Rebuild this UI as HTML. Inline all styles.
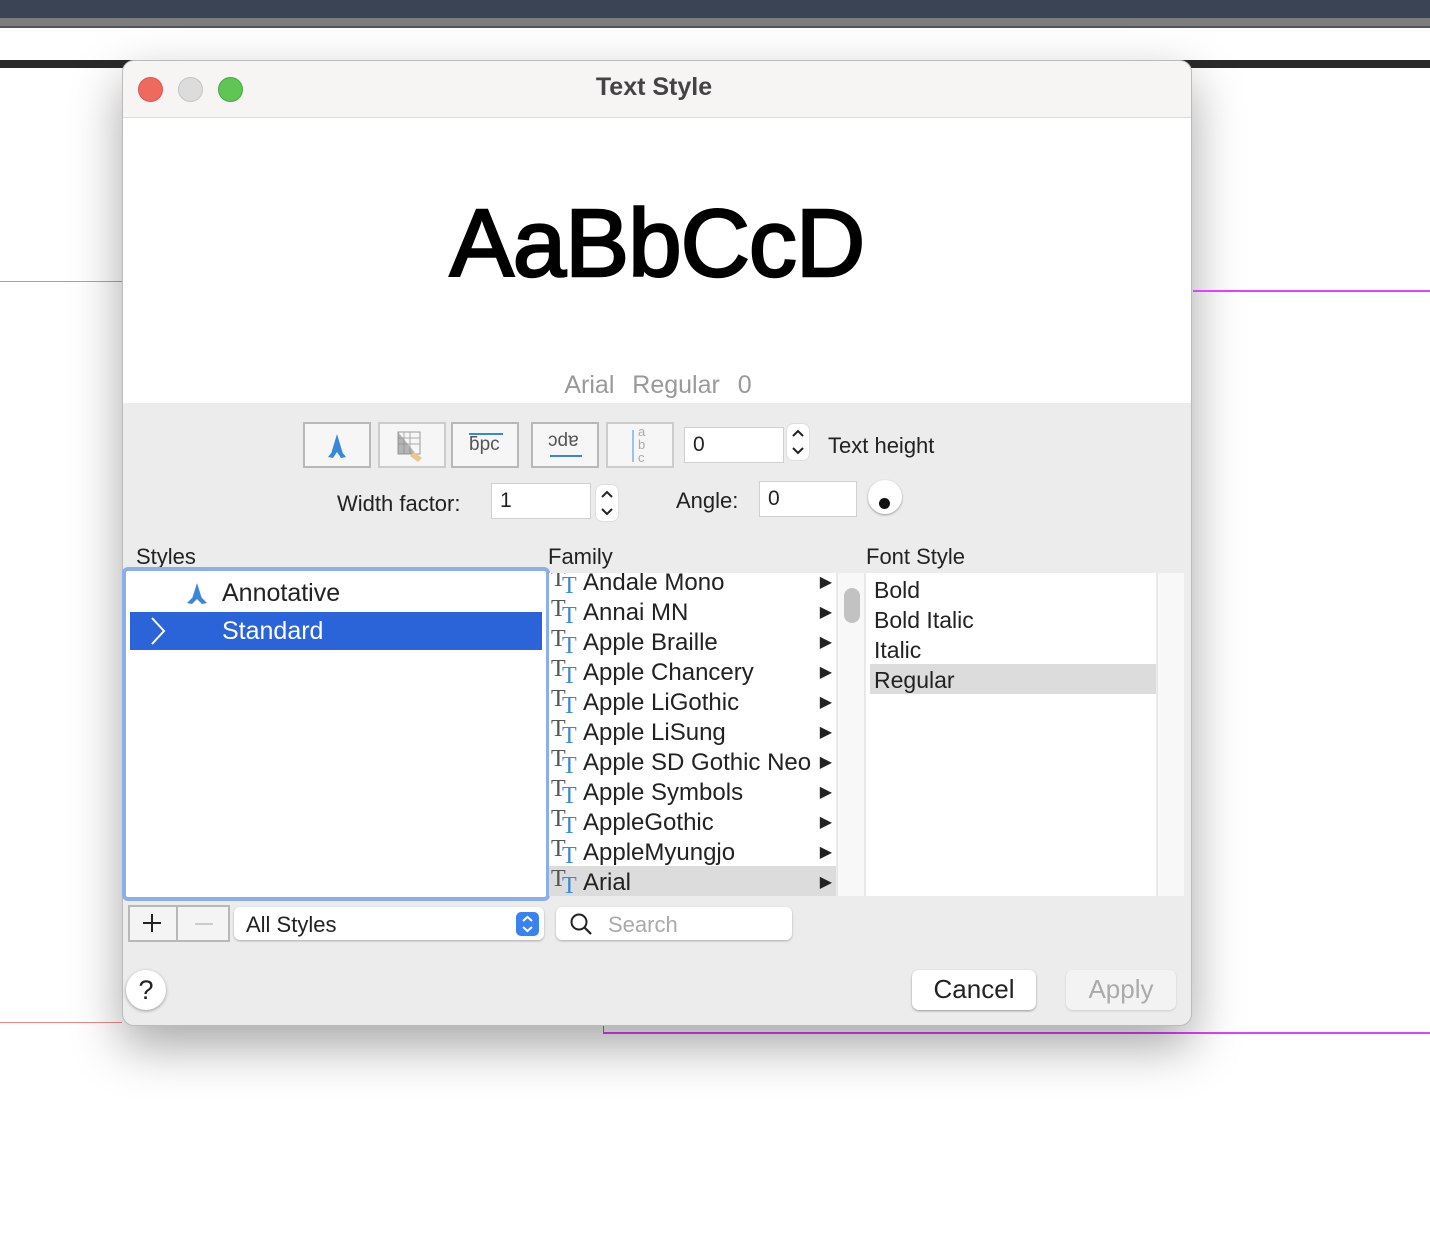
<!DOCTYPE html>
<html><head><meta charset="utf-8"><style>
*{margin:0;padding:0;box-sizing:border-box}
body{width:1430px;height:1234px;background:#fff;position:relative;overflow:hidden;font-family:"Liberation Sans",sans-serif;color:#222}
.a{position:absolute}
.btn{position:absolute;top:422px;width:68px;height:46px;border:2px solid #b8b8b8;background:#f6f6f6}
.inp{position:absolute;background:#fff;border:1px solid #d0d0d0;font-size:21px;padding-left:8px;line-height:34px}
.step{position:absolute;width:22px;height:36px;background:#fff;border-radius:6px;box-shadow:0 0 1px #999}
.fam{position:absolute;left:549px;width:287px;height:30px;font-size:24px;line-height:30px}
.fam .t1{position:absolute;left:2px;top:-4px;font-family:"Liberation Serif",serif;font-size:24px;color:#555}
.fam .t2{position:absolute;left:13px;top:3px;font-family:"Liberation Serif",serif;font-size:24px;color:#3a86d8}
.fam .n{position:absolute;left:34px}
.fam .ar{position:absolute;right:4px;top:0;font-size:16px}
.fs{position:absolute;left:874px;font-size:23px;line-height:30px}
</style></head><body>
<div class="a" style="left:0;top:0;width:1430px;height:18px;background:#3a4454"></div>
<div class="a" style="left:0;top:18px;width:1430px;height:10px;background:#7d7d7d;border-bottom:2px solid #555"></div>
<div class="a" style="left:0;top:60px;width:1430px;height:8px;background:#2a2a2a"></div>
<div class="a" style="left:0;top:281px;width:122px;height:1px;background:#e88"></div>
<div class="a" style="left:0;top:1022px;width:122px;height:1px;background:#e88"></div>
<div class="a" style="left:603px;top:1026px;width:1px;height:7px;background:#d4f"></div>
<div class="a" style="left:603px;top:1032px;width:827px;height:2px;background:#d4f"></div>

<div class="a" style="left:122px;top:60px;width:1070px;height:966px;background:#ececec;border-radius:12px;box-shadow:0 20px 50px rgba(0,0,0,.35);overflow:hidden;border:1px solid #bbb">
 <div class="a" style="left:0;top:0;width:1070px;height:57px;background:#f6f5f4;border-bottom:1px solid #dcdcdc"></div>
 <div class="a" style="left:15px;top:16px;width:25px;height:25px;border-radius:50%;background:#ee6a5e;border:1px solid #d55"></div>
 <div class="a" style="left:55px;top:16px;width:25px;height:25px;border-radius:50%;background:#dcdcdc;border:1px solid #c4c4c4"></div>
 <div class="a" style="left:95px;top:16px;width:25px;height:25px;border-radius:50%;background:#61c554;border:1px solid #4a4"></div>
 <div class="a" style="left:-4px;top:12px;width:1070px;text-align:center;font-size:25px;font-weight:bold;color:#444">Text Style</div>
 <div class="a" style="left:0;top:57px;width:1070px;height:285px;background:#fff"></div>
 <div class="a" style="left:0;top:128px;width:1068px;text-align:center;font-size:96px;color:#000;letter-spacing:-1px;line-height:110px;-webkit-text-stroke:2.5px #000">AaBbCcD</div>
 <div class="a" style="left:0;top:310px;width:1070px;text-align:center;font-size:25px;color:#999;word-spacing:2px">Arial&nbsp; Regular&nbsp; 0</div>
</div>
<div class="a" style="left:1193px;top:290px;width:237px;height:2px;background:#d4f"></div>

<div class="btn" style="left:303px"><svg width="64" height="42"><path d="M32 10 L38 30 L32 26 L26 30 Z M23 33 L32 22 L41 33 L36 34 L32 28 L28 34 Z" fill="#3a86d8"/></svg></div>
<div class="btn" style="left:378px;border-color:#ccc"><svg width="64" height="42"><rect x="18" y="8" width="22" height="22" fill="none" stroke="#999"/><path d="M24 8 v22 M30 8 v22 M18 14 h22 M18 20 h22" stroke="#aaa"/><path d="M18 8 L18 30 L36 30 Z" fill="#888" opacity=".6"/><path d="M34 28 l8 6 -4 4 -8-6z" fill="#e8c890"/></svg></div>
<div class="btn" style="left:451px"><div class="a" style="left:16px;top:9px;width:34px;height:2px;background:#3a86d8"></div><div class="a" style="left:16px;top:10px;font-size:19px;color:#555">ƃpc</div></div>
<div class="btn" style="left:531px"><div class="a" style="left:15px;top:6px;font-size:19px;color:#555">ɔdɐ</div><div class="a" style="left:17px;top:31px;width:32px;height:2px;background:#3a86d8"></div></div>
<div class="btn" style="left:606px;border-color:#ccc"><div class="a" style="left:24px;top:6px;width:2px;height:32px;background:#9bc2ee"></div><div class="a" style="left:30px;top:1px;font-size:13px;line-height:13px;color:#aaa">a<br>b<br>c</div></div>
<div class="inp" style="left:684px;top:427px;width:100px;height:36px">0</div>
<div class="step" style="left:787px;top:424px"><svg width="22" height="36"><path d="M6 12 L11 7 L16 12 M6 24 L11 29 L16 24" stroke="#222" stroke-width="2" fill="none"/></svg></div>
<div class="a" style="left:828px;top:433px;font-size:22px">Text height</div>
<div class="a" style="left:337px;top:491px;font-size:22px">Width factor:</div>
<div class="inp" style="left:491px;top:483px;width:100px;height:36px">1</div>
<div class="step" style="left:596px;top:485px"><svg width="22" height="36"><path d="M6 12 L11 7 L16 12 M6 24 L11 29 L16 24" stroke="#222" stroke-width="2" fill="none"/></svg></div>
<div class="a" style="left:676px;top:488px;font-size:22px">Angle:</div>
<div class="inp" style="left:759px;top:481px;width:98px;height:36px">0</div>
<div class="a" style="left:868px;top:480px;width:34px;height:34px;border-radius:50%;background:#fff;box-shadow:0 1px 2px #999"></div>
<div class="a" style="left:879px;top:498px;width:11px;height:11px;border-radius:50%;background:#111"></div>

<div class="a" style="left:136px;top:544px;font-size:22px">Styles</div>
<div class="a" style="left:548px;top:544px;font-size:22px">Family</div>
<div class="a" style="left:866px;top:544px;font-size:22px">Font Style</div>

<div class="a" style="left:122px;top:567px;width:428px;height:334px;border:4px solid #8daeeb;border-radius:6px;background:#fff"></div>
<div class="a" style="left:130px;top:574px;width:412px;height:322px;background:#fff"></div>
<svg class="a" style="left:184px;top:581px" width="26" height="26"><path d="M13 2 L18 18 L13 15 L8 18 Z M3 22 L13 12 L23 22 L18 23 L13 18 L8 23 Z" fill="#3a86d8"/></svg>
<div class="a" style="left:222px;top:579px;font-size:25px">Annotative</div>
<div class="a" style="left:130px;top:612px;width:412px;height:38px;background:#2b64d9"></div>
<svg class="a" style="left:148px;top:616px" width="20" height="30"><path d="M4 2 L16 15 L4 28" stroke="#fff" stroke-width="2" fill="none"/></svg>
<div class="a" style="left:222px;top:617px;font-size:25px;color:#fff">Standard</div>

<div class="a" style="left:549px;top:573px;width:287px;height:323px;background:#fff"></div>
<div class="a" style="left:549px;top:866px;width:287px;height:30px;background:#dcdcdc"></div>
<div class="a" style="left:549px;top:573px;width:287px;height:323px;overflow:hidden">
<div class="fam" style="left:0;top:-5px"><span class="t1">T</span><span class="t2">T</span><span class="n">Andale Mono</span><span class="ar">▶</span></div>
<div class="fam" style="left:0;top:25px"><span class="t1">T</span><span class="t2">T</span><span class="n">Annai MN</span><span class="ar">▶</span></div>
<div class="fam" style="left:0;top:55px"><span class="t1">T</span><span class="t2">T</span><span class="n">Apple Braille</span><span class="ar">▶</span></div>
<div class="fam" style="left:0;top:85px"><span class="t1">T</span><span class="t2">T</span><span class="n">Apple Chancery</span><span class="ar">▶</span></div>
<div class="fam" style="left:0;top:115px"><span class="t1">T</span><span class="t2">T</span><span class="n">Apple LiGothic</span><span class="ar">▶</span></div>
<div class="fam" style="left:0;top:145px"><span class="t1">T</span><span class="t2">T</span><span class="n">Apple LiSung</span><span class="ar">▶</span></div>
<div class="fam" style="left:0;top:175px"><span class="t1">T</span><span class="t2">T</span><span class="n">Apple SD Gothic Neo</span><span class="ar">▶</span></div>
<div class="fam" style="left:0;top:205px"><span class="t1">T</span><span class="t2">T</span><span class="n">Apple Symbols</span><span class="ar">▶</span></div>
<div class="fam" style="left:0;top:235px"><span class="t1">T</span><span class="t2">T</span><span class="n">AppleGothic</span><span class="ar">▶</span></div>
<div class="fam" style="left:0;top:265px"><span class="t1">T</span><span class="t2">T</span><span class="n">AppleMyungjo</span><span class="ar">▶</span></div>
<div class="fam" style="left:0;top:295px"><span class="t1">T</span><span class="t2">T</span><span class="n">Arial</span><span class="ar">▶</span></div>
</div>
<div class="a" style="left:837px;top:573px;width:28px;height:323px;background:#f8f8f8;border-left:1px solid #e6e6e6;border-right:1px solid #e6e6e6"></div>
<div class="a" style="left:844px;top:588px;width:16px;height:35px;border-radius:8px;background:#c2c2c2"></div>
<div class="a" style="left:866px;top:573px;width:290px;height:323px;background:#fff"></div>
<div class="a" style="left:1157px;top:573px;width:27px;height:323px;background:#f8f8f8;border-left:1px solid #e6e6e6"></div>
<div class="a" style="left:870px;top:664px;width:286px;height:30px;background:#dcdcdc"></div>
<div class="fs" style="top:575px">Bold</div>
<div class="fs" style="top:605px">Bold Italic</div>
<div class="fs" style="top:635px">Italic</div>
<div class="fs" style="top:665px">Regular</div>

<div class="a" style="left:128px;top:905px;width:102px;height:37px;border:2px solid #b8b8b8;background:#f4f4f4"></div>
<div class="a" style="left:176px;top:905px;width:2px;height:37px;background:#b8b8b8"></div>
<svg class="a" style="left:141px;top:912px" width="22" height="22"><path d="M11 2 V20 M2 11 H20" stroke="#222" stroke-width="2"/></svg>
<div class="a" style="left:195px;top:923px;width:18px;height:2px;background:#ccc"></div>
<div class="a" style="left:234px;top:907px;width:310px;height:33px;background:#fff;border-radius:6px;box-shadow:0 1px 2px #aaa"></div>
<div class="a" style="left:246px;top:912px;font-size:22px">All Styles</div>
<div class="a" style="left:516px;top:912px;width:23px;height:24px;background:#3b82f1;border-radius:5px"><svg width="23" height="24"><path d="M7 9 L11.5 5 L16 9 M7 15 L11.5 19 L16 15" stroke="#fff" stroke-width="2" fill="none"/></svg></div>
<div class="a" style="left:556px;top:907px;width:236px;height:33px;background:#fff;border-radius:6px;box-shadow:0 1px 2px #aaa"></div>
<svg class="a" style="left:569px;top:912px" width="24" height="24"><circle cx="10" cy="10" r="7.5" stroke="#222" stroke-width="2" fill="none"/><path d="M15.5 15.5 L22 22" stroke="#222" stroke-width="2.2"/></svg>
<div class="a" style="left:608px;top:912px;font-size:22px;color:#aaa">Search</div>
<div class="a" style="left:126px;top:970px;width:40px;height:40px;border-radius:50%;background:#fff;box-shadow:0 1px 3px #999;text-align:center;font-size:27px;line-height:40px">?</div>
<div class="a" style="left:912px;top:970px;width:124px;height:40px;border-radius:7px;background:#fff;box-shadow:0 1px 2px #999;text-align:center;font-size:26px;line-height:38px">Cancel</div>
<div class="a" style="left:1066px;top:970px;width:110px;height:40px;border-radius:7px;background:#f3f3f3;box-shadow:0 1px 2px #ccc;text-align:center;font-size:26px;line-height:38px;color:#aaa">Apply</div>
</body></html>
